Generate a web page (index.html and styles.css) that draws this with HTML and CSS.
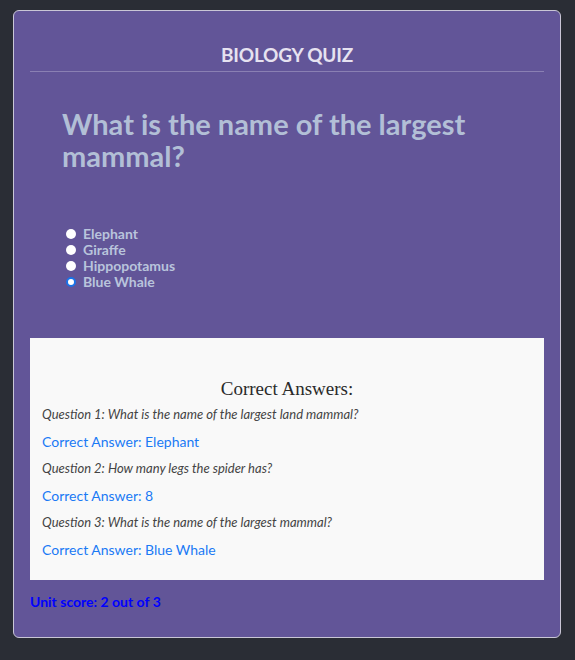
FILE: index.html
```html
<!DOCTYPE html>
<html>
<head>
<meta charset="utf-8">
<link rel="stylesheet" href="styles.css">
</head>
<body>
<div class="card">
  <h2 class="title">BIOLOGY QUIZ</h2>
  <hr class="rule">
  <h1 class="question">What is the name of the largest mammal?</h1>
  <ul class="options">
    <li><label><input type="radio" name="q"> Elephant</label></li>
    <li><label><input type="radio" name="q"> Giraffe</label></li>
    <li><label><input type="radio" name="q"> Hippopotamus</label></li>
    <li><label><input type="radio" name="q" checked> Blue Whale</label></li>
  </ul>
  <div class="results">
    <h3 class="results-title">Correct Answers:</h3>
    <p class="q">Question 1: What is the name of the largest land mammal?</p>
    <p class="a">Correct Answer: Elephant</p>
    <p class="q">Question 2: How many legs the spider has?</p>
    <p class="a">Correct Answer: 8</p>
    <p class="q">Question 3: What is the name of the largest mammal?</p>
    <p class="a">Correct Answer: Blue Whale</p>
  </div>
  <p class="score">Unit score: 2 out of 3</p>
</div>
</body>
</html>
```
FILE: styles.css
```css
html, body {
  margin: 0;
  padding: 0;
}
body {
  background: #2a2d35;
  font-family: Lato, "Open Sans", sans-serif;
  padding: 10px 13px 0 13px;
  height: 660px;
  box-sizing: border-box;
}
.card {
  width: 548px;
  box-sizing: border-box;
  height: 628px;
  background: #625598;
  border: 1px solid #c9c6d6;
  border-radius: 6px;
  padding: 0 16px;
}
.title {
  margin: 0;
  padding-top: 32px;
  text-align: center;
  color: #e6e2f0;
  font-size: 19px;
  font-weight: 700;
  letter-spacing: -0.2px;
  line-height: 24px;
}
.rule {
  margin: 4px 0 0 0;
  border: 0;
  border-top: 1px solid #8a80b3;
  height: 0;
}
.question {
  margin: 36px 0 0 32px;
  color: #b2bfd6;
  font-size: 29px;
  font-weight: 700;
  line-height: 32px;
  width: 420px;
}
.options {
  list-style: none;
  margin: 54px 0 0 0;
  padding: 0 0 0 36px;
  color: #b9c4dc;
  font-size: 14px;
  font-weight: 700;
  line-height: 16px;
}
.options label {
  display: flex;
  align-items: center;
  gap: 7px;
}
.options input {
  appearance: none;
  -webkit-appearance: none;
  margin: 0;
  width: 10px;
  height: 10px;
  border-radius: 50%;
  background: #fff;
  box-sizing: border-box;
}
.options input:checked {
  border: 2px solid #1a73e8;
}
.results {
  margin-top: 48px;
  background: #f9f9f9;
  padding: 40px 12px 16px 12px;
  height: 242px;
  box-sizing: border-box;
}
.results-title {
  margin: 0 0 6px 0;
  text-align: center;
  font-family: "Liberation Serif", serif;
  font-weight: 400;
  font-size: 19px;
  color: #2a2a2a;
  line-height: 22px;
}
.q {
  margin: 0;
  font-style: italic;
  font-size: 13px;
  color: #444;
  line-height: 16px;
}
.a {
  margin: 12px 0 10px 0;
  font-size: 14px;
  color: #1a7af5;
  line-height: 16px;
}
.score {
  margin: 14px 0 0 0;
  color: #0000ff;
  font-weight: 700;
  font-size: 14px;
  line-height: 16px;
}
```
